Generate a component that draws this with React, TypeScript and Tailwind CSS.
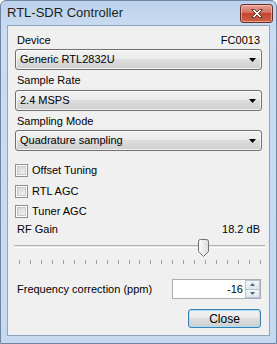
import React from 'react';

const font = { fontFamily: '"Liberation Sans", Arial, sans-serif' };

function Combo({ value }: { value: string }) {
  return (
    <div className="mx-[7px] h-[21px] rounded-[3px] border border-[#707070] bg-[linear-gradient(#f2f2f2_0%,#ebebeb_45%,#dddddd_50%,#cfcfcf_100%)] flex items-center pl-[4px] pr-[5px] shadow-[inset_0_0_0_1px_rgba(255,255,255,0.7)]">
      <span className="flex-1 text-[11px] text-black leading-none">{value}</span>
      <svg width="7" height="4" viewBox="0 0 7 4">
        <path d="M0 0H7L3.5 4Z" fill="#000" />
      </svg>
    </div>
  );
}

function Check({ label, className }: { label: string; className?: string }) {
  return (
    <div className={'flex items-center ml-[7px] ' + (className ?? '')}>
      <div className="w-[13px] h-[13px] border border-[#8f8f8f] bg-white p-[1px]">
        <div className="w-full h-full border border-[#c8c8c8] bg-[linear-gradient(135deg,#d5d5d5,#f4f4f4)]" />
      </div>
      <span className="ml-[4px] text-[11px] leading-none">{label}</span>
    </div>
  );
}

export default function App() {
  const ticks = Array.from({ length: 23 }, (_, i) => i);
  return (
    <div style={font} className="w-[277px] h-[344px] bg-white">
      <div className="w-[277px] h-[344px] border border-[#6e87a6] rounded-t-[6px] bg-[linear-gradient(#bcd2ec,#cbdcf0_30px,#c6d9ef)] flex flex-col px-[6px] pb-[7px]">
        {/* title bar */}
        <div className="h-[24px] flex items-start relative">
          <span className="mt-[5px] text-[13px] leading-none text-[#1e1e1e]">RTL-SDR Controller</span>
          <div className="absolute right-[-3px] top-[3px] w-[33px] h-[19px] rounded-[3px] border border-[#6b2d2a] bg-[linear-gradient(#e8a195,#d2705f_45%,#c4432f_50%,#cd6349)] flex items-center justify-center shadow-[inset_0_0_0_1px_rgba(255,220,210,0.5)]">
            <svg width="14" height="11" viewBox="0 0 14 11">
              <path
                d="M1.5 1.5H4.5L7 4L9.5 1.5H12.5L8.5 5.5L12.5 9.5H9.5L7 7L4.5 9.5H1.5L5.5 5.5Z"
                fill="#fff"
                stroke="#5a3a36"
                strokeWidth="1"
                strokeLinejoin="round"
              />
            </svg>
          </div>
        </div>
        {/* client */}
        <div className="flex-1 border border-[#8fa4be] bg-[#f0f0f0] text-[11px] text-black flex flex-col">
          <div className="mt-[7px] mx-[9px] flex justify-between h-[14px] items-center leading-none">
            <span>Device</span>
            <span>FC0013</span>
          </div>
          <div className="mt-[2px]">
            <Combo value="Generic RTL2832U" />
          </div>
          <div className="mt-[3px] mx-[9px] h-[14px] flex items-center leading-none">Sample Rate</div>
          <div className="mt-[3px]">
            <Combo value="2.4 MSPS" />
          </div>
          <div className="mt-[3px] mx-[9px] h-[14px] flex items-center leading-none">Sampling Mode</div>
          <div className="mt-[2px]">
            <Combo value="Quadrature sampling" />
          </div>
          <Check label="Offset Tuning" className="mt-[13px]" />
          <Check label="RTL AGC" className="mt-[8px]" />
          <Check label="Tuner AGC" className="mt-[7px]" />
          <div className="mt-[4px] mx-[9px] flex justify-between h-[14px] items-center leading-none">
            <span>RF Gain</span>
            <span>18.2 dB</span>
          </div>
          {/* slider */}
          <div className="relative mt-[2px] h-[26px]">
            <div className="absolute left-[6px] right-[4px] top-[7px] h-[3px] border-t border-[#b0b0b0] border-b border-b-white bg-[#e7eaea]" />
            <svg className="absolute left-[190px] top-[1px]" width="11" height="18" viewBox="0 0 11 18">
              <defs>
                <linearGradient id="th" x1="0" x2="1" y1="0" y2="0">
                  <stop offset="0" stopColor="#fdfdfd" />
                  <stop offset="1" stopColor="#dcdcdc" />
                </linearGradient>
              </defs>
              <path d="M0.5 2.5Q0.5 0.5 2.5 0.5H8.5Q10.5 0.5 10.5 2.5V12.5L5.5 17.5L0.5 12.5Z" fill="url(#th)" stroke="#6f6f6f" />
            </svg>
            <div className="absolute left-[11px] w-[242px] top-[22px] flex justify-between">
              {ticks.map((t) => (
                <div key={t} className="w-px h-[4px] bg-[#a0a0a0]" />
              ))}
            </div>
          </div>
          {/* frequency correction */}
          <div className="mt-[15px] flex items-center">
            <span className="ml-[9px] flex-1 leading-none">Frequency correction (ppm)</span>
            <div className="mr-[8px] w-[89px] h-[20px] border border-[#abadb3] bg-white flex items-center">
              <span className="flex-1 text-right pr-[2px] leading-none">-16</span>
              <div className="w-[15px] h-[18px] flex flex-col">
                <div className="flex-1 border border-[#b8c3d3] bg-[linear-gradient(#f4f6f9,#dfe5ee)] flex items-center justify-center">
                  <svg width="5" height="3" viewBox="0 0 5 3"><path d="M2.5 0L5 3H0Z" fill="#4d6185" /></svg>
                </div>
                <div className="flex-1 border border-t-0 border-[#b8c3d3] bg-[linear-gradient(#f4f6f9,#dfe5ee)] flex items-center justify-center">
                  <svg width="5" height="3" viewBox="0 0 5 3"><path d="M0 0H5L2.5 3Z" fill="#4d6185" /></svg>
                </div>
              </div>
            </div>
          </div>
          <div className="mt-[10px] flex justify-end mr-[8px]">
            <div className="w-[73px] h-[19px] rounded-[3px] border border-[#3c7fb1] bg-[linear-gradient(#f2f2f2,#ebebeb_45%,#dddddd_50%,#cfcfcf)] shadow-[inset_0_0_0_1px_#a6e0fb] flex items-center justify-center leading-none text-[12px]">
              Close
            </div>
          </div>
        </div>
      </div>
    </div>
  );
}
